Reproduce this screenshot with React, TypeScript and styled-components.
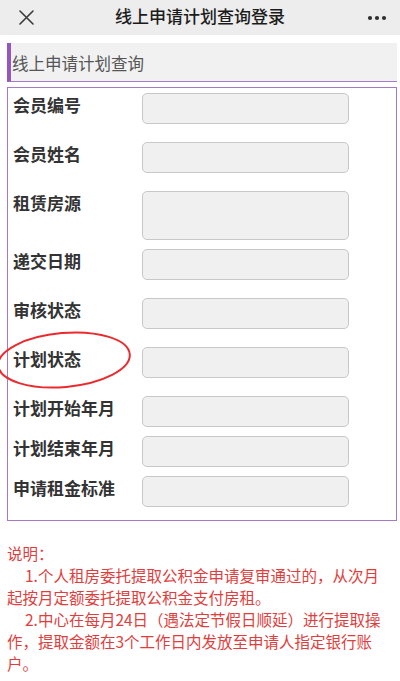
import styled, { createGlobalStyle } from 'styled-components';

const GlobalStyle = createGlobalStyle`
  html, body {
    margin: 0;
    padding: 0;
    background: #ffffff;
  }
  body {
    font-family: 'Noto Sans CJK SC', 'Noto Sans', sans-serif;
    overflow-x: hidden;
  }
`;

// compact rows sit closer together (the last three in the form)
const fields = [
  { label: '会员编号' },
  { label: '会员姓名' },
  { label: '租赁房源', tall: true },
  { label: '递交日期' },
  { label: '审核状态' },
  { label: '计划状态', marked: true },
  { label: '计划开始年月', compact: true },
  { label: '计划结束年月', compact: true },
  { label: '申请租金标准', compact: true },
];

const CloseIcon = () => (
  <svg width="15" height="15" viewBox="0 0 15 15">
    <path d="M1 1 L14 14 M14 1 L1 14" stroke="#3a3a3a" strokeWidth="1.6" strokeLinecap="round" />
  </svg>
);

const MoreIcon = () => (
  <svg width="20" height="6" viewBox="0 0 20 6">
    <circle cx="3" cy="3" r="2.1" fill="#2f2f2f" />
    <circle cx="10" cy="3" r="2.1" fill="#2f2f2f" />
    <circle cx="17" cy="3" r="2.1" fill="#2f2f2f" />
  </svg>
);

const App = () => {
  return (
    <Page>
      <GlobalStyle />
      <NavBar>
        <NavButton>
          <CloseIcon />
        </NavButton>
        <NavTitle>线上申请计划查询登录</NavTitle>
        <NavButton $right>
          <MoreIcon />
        </NavButton>
      </NavBar>

      <Content>
        <SectionTitle>线上申请计划查询</SectionTitle>
        <FormBox>
          {fields.map((f) => (
            <Row key={f.label} $compact={f.compact}>
              <Label>
                {f.label}
                {f.marked && (
                  <Circled width="150" height="70" viewBox="0 0 150 70">
                    <ellipse
                      cx="72"
                      cy="34"
                      rx="66"
                      ry="27"
                      transform="rotate(-5 72 34)"
                      fill="none"
                      stroke="#ea2a2e"
                      strokeWidth="2"
                    />
                  </Circled>
                )}
              </Label>
              <Field $tall={f.tall} />
            </Row>
          ))}
        </FormBox>

        <Notes>
          <div>说明：</div>
          <NoteText>1.个人租房委托提取公积金申请复审通过的，从次月起按月定额委托提取公积金支付房租。</NoteText>
          <NoteText>2.中心在每月24日（遇法定节假日顺延）进行提取操作，提取金额在3个工作日内发放至申请人指定银行账户。</NoteText>
        </Notes>
      </Content>
    </Page>
  );
};

export default App;

const Page = styled.div`
  width: 400px;
  min-height: 681px;
  background: #ffffff;
`;

const NavBar = styled.div`
  height: 35px;
  background: #ededed;
  display: flex;
  align-items: center;
  justify-content: space-between;
`;

const NavButton = styled.div<{ $right?: boolean }>`
  width: 60px;
  height: 35px;
  display: flex;
  align-items: center;
  justify-content: ${({ $right }) => ($right ? 'flex-end' : 'flex-start')};
  padding: ${({ $right }) => ($right ? '0 13px 0 0' : '0 0 0 19px')};
  box-sizing: border-box;
`;

const NavTitle = styled.div`
  flex: 1;
  text-align: center;
  font-size: 17px;
  font-weight: 500;
  color: #1c1c1c;
  line-height: 35px;
  margin-top: -4px;
`;

const Content = styled.div`
  padding: 8px 3px 0 7px;
`;

const SectionTitle = styled.div`
  height: 38px;
  line-height: 40px;
  background: #f1f1f1;
  border-left: 4px solid #9457c0;
  border-bottom: 1px solid #a47ac8;
  padding-left: 1px;
  font-size: 16.5px;
  color: #555555;
`;

const FormBox = styled.div`
  margin-top: 5px;
  border: 1px solid #a47ac8;
  padding: 5px 0 13px 5px;
  display: flex;
  flex-direction: column;
  gap: 9px;
`;

const Row = styled.div<{ $compact?: boolean }>`
  display: flex;
  align-items: flex-start;
  min-height: ${({ $compact }) => ($compact ? '0' : '40px')};
`;

const Label = styled.div`
  position: relative;
  width: 129px;
  flex-shrink: 0;
  font-size: 17px;
  font-weight: 700;
  line-height: 24px;
  color: #333333;
`;

const Circled = styled.svg`
  position: absolute;
  left: -21px;
  top: -21px;
  overflow: visible;
  pointer-events: none;
`;

const Field = styled.div<{ $tall?: boolean }>`
  width: 207px;
  height: ${({ $tall }) => ($tall ? '49px' : '31px')};
  box-sizing: border-box;
  background: #f0f0f0;
  border: 1px solid #c8c8c8;
  border-radius: 5px;
`;

const Notes = styled.div`
  margin-top: 21px;
  padding-right: 12px;
  font-size: 15.5px;
  line-height: 22px;
  color: #e13d3d;
`;

const NoteText = styled.p`
  margin: 0;
  text-indent: 18px;
`;
